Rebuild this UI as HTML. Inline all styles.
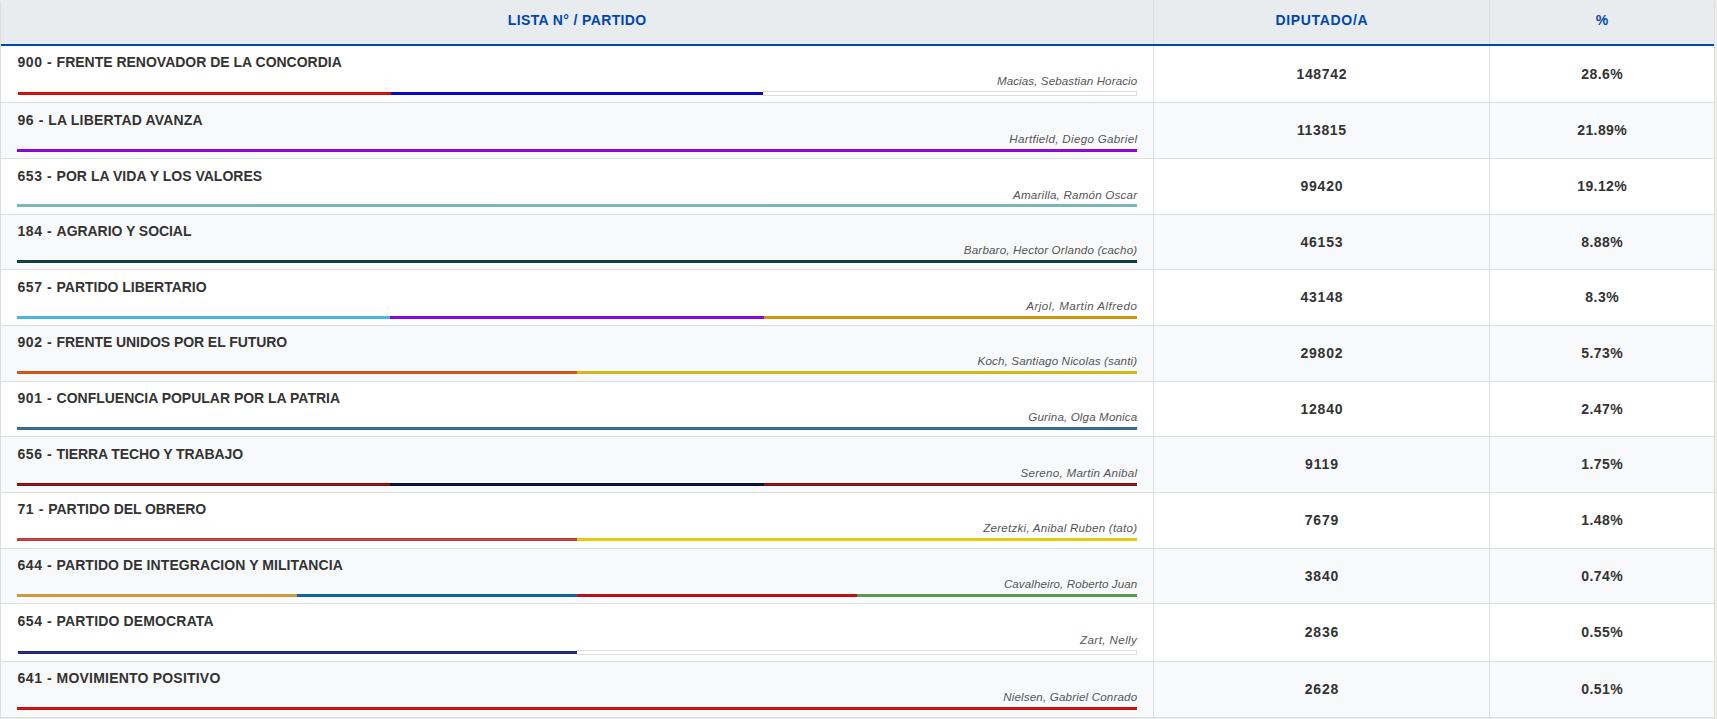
<!DOCTYPE html><html lang="es"><head><meta charset="utf-8"><title>Resultados</title><style>
html,body{margin:0;padding:0;background:#fff}
body{width:1717px;height:719px;overflow:hidden;position:relative;font-family:"Liberation Sans",sans-serif;color:#333}
#w{position:absolute;left:0;top:0;width:1717px;height:719px;background:#ececeb;overflow:hidden}
#bt{position:absolute;left:0;top:718px;width:1714px;height:1px;background:#e3e8ef}
#t{position:absolute;left:0;top:0;width:1713px;height:717px;border-left:1px solid #dedede;border-right:1px solid #dedede;border-bottom:1px solid #dedede;background:#fff;border-radius:3px 3px 0 0;overflow:hidden}
.hd{position:absolute;left:0;top:0;width:1713px;height:44px;background:#e9ecef;border-bottom:2px solid #0047ab}
.hd div{position:absolute;top:12px;height:16px;line-height:16px;font-size:14px;font-weight:bold;color:#0047ab;text-align:center;white-space:nowrap}
.r{position:absolute;left:0;width:1713px;border-bottom:1px solid #dedede}
.r.e{background:#f8f9fa}
.v1,.v2{position:absolute;top:0;bottom:0;width:1px;background:#dedede}
.v1{left:1152px}.v2{left:1488px}
.ti{position:absolute;left:16.5px;height:16px;line-height:16px;font-size:14px;font-weight:bold;white-space:pre;color:#333}
.nm{position:absolute;right:576.7px;height:14px;line-height:14px;font-size:11.6px;font-style:italic;white-space:nowrap;color:#555;text-align:right}
.bar{position:absolute;left:16px;width:1120px;height:5px;display:flex}
.bar i{display:block;box-sizing:border-box;height:5px;border-top:1px solid #fff;border-bottom:1px solid #fff;flex:1 1 0;background-image:linear-gradient(rgba(255,255,255,0) 1px,rgba(255,255,255,.07) 1px,rgba(255,255,255,.07) 2px,rgba(255,255,255,0) 2px)}
.bar i.x{border:1px solid #ddd;border-left:0;background:#fff}
.bar{box-shadow:-1px 0 0 #fff,1px 0 0 #fff}
.bar.p{box-shadow:none;box-sizing:border-box;border-left:1px solid #f4f4f2}
.bar.p i.x{flex:1 1 1px}
.c2,.c3{position:absolute;height:16px;text-align:center;font-size:14px;font-weight:bold;color:#333;white-space:nowrap;line-height:16px}
.c2{left:1153px;width:335px}.c3{left:1489px;width:224px}
</style></head><body><div id="w"><div id="bt"></div><div id="t">
<div class="hd"><div style="left:0;width:1152px;letter-spacing:0.369px;text-indent:0.369px">LISTA N° / PARTIDO</div><div style="left:1153px;width:335px;letter-spacing:0.68px;text-indent:0.68px">DIPUTADO/A</div><div style="left:1489px;width:224px">%</div><span class="v1" style="background:#dcdfe2"></span><span class="v2" style="background:#dcdfe2"></span></div>
<div class="r" style="top:46px;height:56px"><div class="ti" style="top:8px"><span style="letter-spacing:0.548px">900 - </span><span style="letter-spacing:-0.008px">FRENTE RENOVADOR DE LA CONCORDIA</span></div><div class="nm" style="top:28px;letter-spacing:0.101px">Macias, Sebastian Horacio</div><div class="bar p" style="top:45px"><i style="background-color:#cc0a0a"></i><i style="background-color:#0000c6"></i><i class="x"></i></div><span class="v1"></span><span class="v2"></span><div class="c2" style="top:20px;letter-spacing:0.65px;text-indent:0.65px">148742</div><div class="c3" style="top:20px;letter-spacing:0.45px;text-indent:0.45px">28.6%</div></div>
<div class="r e" style="top:103px;height:55px"><div class="ti" style="top:9px"><span style="letter-spacing:0.557px">96 - </span><span style="letter-spacing:0.171px">LA LIBERTAD AVANZA</span></div><div class="nm" style="top:29px;letter-spacing:0.314px">Hartfield, Diego Gabriel</div><div class="bar" style="top:45px"><i style="background-color:#8800d8"></i></div><span class="v1"></span><span class="v2"></span><div class="c2" style="top:19px;letter-spacing:0.65px;text-indent:0.65px">113815</div><div class="c3" style="top:19px;letter-spacing:0.4px;text-indent:0.4px">21.89%</div></div>
<div class="r" style="top:159px;height:55px"><div class="ti" style="top:9px"><span style="letter-spacing:0.548px">653 - </span><span style="letter-spacing:0.02px">POR LA VIDA Y LOS VALORES</span></div><div class="nm" style="top:29px;letter-spacing:0.21px">Amarilla, Ramón Oscar</div><div class="bar" style="top:44px"><i style="background-color:#78b2bc"></i></div><span class="v1"></span><span class="v2"></span><div class="c2" style="top:19px;letter-spacing:0.75px;text-indent:0.75px">99420</div><div class="c3" style="top:19px;letter-spacing:0.4px;text-indent:0.4px">19.12%</div></div>
<div class="r e" style="top:215px;height:54px"><div class="ti" style="top:8px"><span style="letter-spacing:0.548px">184 - </span><span style="letter-spacing:-0.048px">AGRARIO Y SOCIAL</span></div><div class="nm" style="top:28px;letter-spacing:0.171px">Barbaro, Hector Orlando (cacho)</div><div class="bar" style="top:44px"><i style="background-color:#073a3a"></i></div><span class="v1"></span><span class="v2"></span><div class="c2" style="top:19px;letter-spacing:0.75px;text-indent:0.75px">46153</div><div class="c3" style="top:19px;letter-spacing:0.45px;text-indent:0.45px">8.88%</div></div>
<div class="r" style="top:270px;height:55px"><div class="ti" style="top:9px"><span style="letter-spacing:0.548px">657 - </span><span style="letter-spacing:-0.022px">PARTIDO LIBERTARIO</span></div><div class="nm" style="top:29px;letter-spacing:0.458px">Arjol, Martin Alfredo</div><div class="bar" style="top:45px"><i style="background-color:#48b4dc"></i><i style="background-color:#8800dc"></i><i style="background-color:#cc9208"></i></div><span class="v1"></span><span class="v2"></span><div class="c2" style="top:19px;letter-spacing:0.75px;text-indent:0.75px">43148</div><div class="c3" style="top:19px;letter-spacing:0.5px;text-indent:0.5px">8.3%</div></div>
<div class="r e" style="top:326px;height:55px"><div class="ti" style="top:8px"><span style="letter-spacing:0.548px">902 - </span><span style="letter-spacing:-0.066px">FRENTE UNIDOS POR EL FUTURO</span></div><div class="nm" style="top:28px;letter-spacing:0.149px">Koch, Santiago Nicolas (santi)</div><div class="bar" style="top:44px"><i style="background-color:#d05010"></i><i style="background-color:#d8b216"></i></div><span class="v1"></span><span class="v2"></span><div class="c2" style="top:19px;letter-spacing:0.75px;text-indent:0.75px">29802</div><div class="c3" style="top:19px;letter-spacing:0.45px;text-indent:0.45px">5.73%</div></div>
<div class="r" style="top:382px;height:54px"><div class="ti" style="top:8px"><span style="letter-spacing:0.548px">901 - </span><span style="letter-spacing:-0.015px">CONFLUENCIA POPULAR POR LA PATRIA</span></div><div class="nm" style="top:28px;letter-spacing:0.139px">Gurina, Olga Monica</div><div class="bar" style="top:44px"><i style="background-color:#346689"></i></div><span class="v1"></span><span class="v2"></span><div class="c2" style="top:19px;letter-spacing:0.75px;text-indent:0.75px">12840</div><div class="c3" style="top:19px;letter-spacing:0.45px;text-indent:0.45px">2.47%</div></div>
<div class="r e" style="top:437px;height:55px"><div class="ti" style="top:9px"><span style="letter-spacing:0.548px">656 - </span><span style="letter-spacing:-0.108px">TIERRA TECHO Y TRABAJO</span></div><div class="nm" style="top:29px;letter-spacing:0.279px">Sereno, Martin Anibal</div><div class="bar" style="top:45px"><i style="background-color:#860a0a"></i><i style="background-color:#000a3c"></i><i style="background-color:#860a0a"></i></div><span class="v1"></span><span class="v2"></span><div class="c2" style="top:19px;letter-spacing:0.85px;text-indent:0.85px">9119</div><div class="c3" style="top:19px;letter-spacing:0.45px;text-indent:0.45px">1.75%</div></div>
<div class="r" style="top:493px;height:55px"><div class="ti" style="top:8px"><span style="letter-spacing:0.557px">71 - </span><span style="letter-spacing:-0.067px">PARTIDO DEL OBRERO</span></div><div class="nm" style="top:28px;letter-spacing:0.239px">Zeretzki, Anibal Ruben (tato)</div><div class="bar" style="top:44px"><i style="background-color:#c23636"></i><i style="background-color:#e2ca06"></i></div><span class="v1"></span><span class="v2"></span><div class="c2" style="top:19px;letter-spacing:0.85px;text-indent:0.85px">7679</div><div class="c3" style="top:19px;letter-spacing:0.45px;text-indent:0.45px">1.48%</div></div>
<div class="r e" style="top:549px;height:54px"><div class="ti" style="top:8px"><span style="letter-spacing:0.548px">644 - </span><span style="letter-spacing:0.075px">PARTIDO DE INTEGRACION Y MILITANCIA</span></div><div class="nm" style="top:28px;letter-spacing:0.081px">Cavalheiro, Roberto Juan</div><div class="bar" style="top:44px"><i style="background-color:#ce9638"></i><i style="background-color:#0260a0"></i><i style="background-color:#be0418"></i><i style="background-color:#4c9852"></i></div><span class="v1"></span><span class="v2"></span><div class="c2" style="top:19px;letter-spacing:0.85px;text-indent:0.85px">3840</div><div class="c3" style="top:19px;letter-spacing:0.45px;text-indent:0.45px">0.74%</div></div>
<div class="r" style="top:604px;height:57px"><div class="ti" style="top:9px"><span style="letter-spacing:0.548px">654 - </span><span style="letter-spacing:0.14px">PARTIDO DEMOCRATA</span></div><div class="nm" style="top:29px;letter-spacing:0.404px">Zart, Nelly</div><div class="bar p" style="top:46px"><i style="background-color:#18247c"></i><i class="x"></i></div><span class="v1"></span><span class="v2"></span><div class="c2" style="top:20px;letter-spacing:0.85px;text-indent:0.85px">2836</div><div class="c3" style="top:20px;letter-spacing:0.45px;text-indent:0.45px">0.55%</div></div>
<div class="r e" style="top:662px;height:55px"><div class="ti" style="top:8px"><span style="letter-spacing:0.548px">641 - </span><span style="letter-spacing:0.206px">MOVIMIENTO POSITIVO</span></div><div class="nm" style="top:28px;letter-spacing:0.167px">Nielsen, Gabriel Conrado</div><div class="bar" style="top:44px"><i style="background-color:#cc0808"></i></div><span class="v1"></span><span class="v2"></span><div class="c2" style="top:19px;letter-spacing:0.85px;text-indent:0.85px">2628</div><div class="c3" style="top:19px;letter-spacing:0.45px;text-indent:0.45px">0.51%</div></div>
</div></div></body></html>
